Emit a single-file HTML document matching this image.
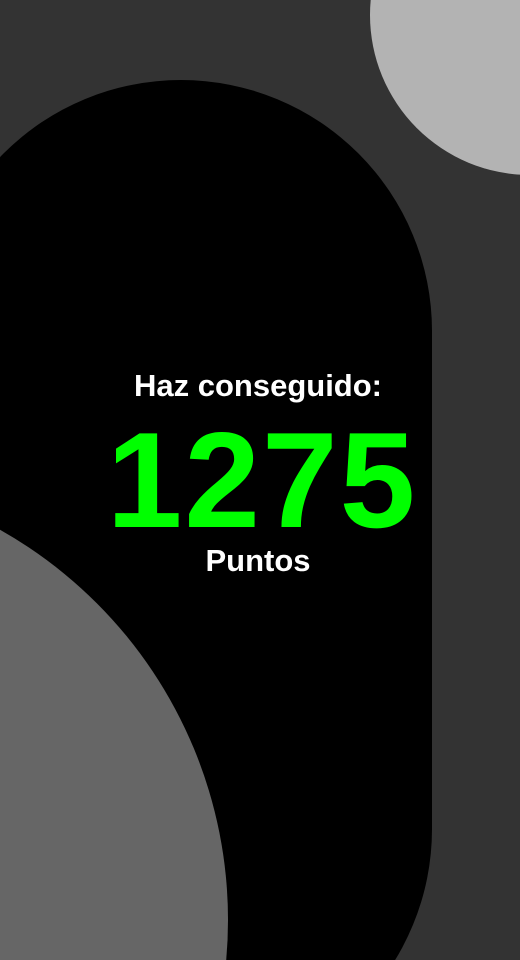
<!DOCTYPE html>
<html style="width:520px;height:960px;overflow:hidden"><head><meta charset="utf-8"><style>
html,body{margin:0;padding:0}
body{width:520px;height:960px;background:#333333;overflow:hidden;font-family:"Liberation Sans",sans-serif;position:relative}
svg{position:absolute;left:0;top:0;display:block}
.t{position:absolute;left:0;width:516px;text-align:center;color:#fff;font-weight:bold}
</style></head><body>
<svg width="520" height="960" viewBox="0 0 520 960">
<rect width="520" height="960" fill="#333"/>
<circle cx="530" cy="15" r="160" fill="#b3b3b3"/>
<path d="M-70 331 A251 251 0 0 1 432 331 L432 829 A251 251 0 0 1 -70 829 Z" fill="#000"/>
<circle cx="-220" cy="920" r="448" fill="#666"/>
</svg>
<div class="t" style="top:368px;font-size:31px;left:0">Haz conseguido:</div>
<div class="t" style="top:405px;font-size:136px;line-height:150px;color:#00ff00;letter-spacing:2px;left:4px">1275</div>
<div class="t" style="top:543px;font-size:31px">Puntos</div>
</body></html>
